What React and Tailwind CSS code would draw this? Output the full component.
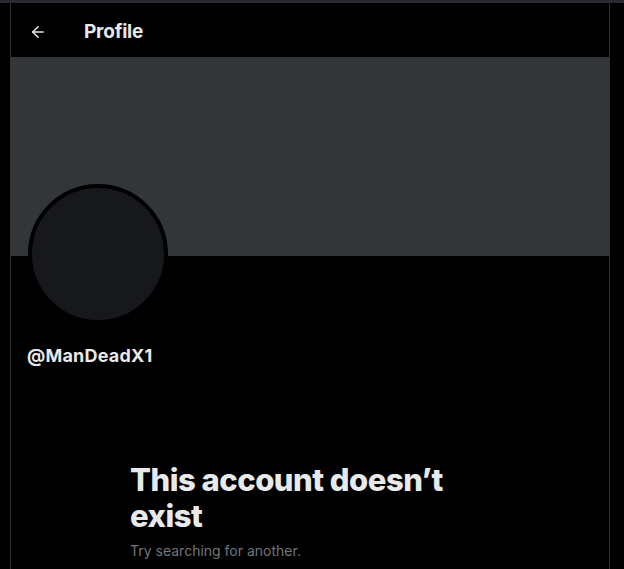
import { ArrowLeft } from "lucide-react";

export default function App() {
  return (
    <div className="h-[569px] w-[624px] overflow-hidden bg-black font-['Inter',sans-serif] text-[#e7e9ea]">
      <div className="h-[3px] bg-[#2b2a33]" />
      <div className="ml-[10px] flex h-[566px] w-[600px] flex-col border-x border-[#2f3336]">
        <div className="flex h-[54px] items-center px-4 pt-[4px]">
          <ArrowLeft className="ml-[2px] h-[18px] w-[18px]" strokeWidth={2} />
          <h1 className="ml-[37px] text-[19px] font-bold tracking-[-0.2px]">Profile</h1>
        </div>
        <div className="h-[199px] bg-[#333639]" />
        <div className="relative px-4">
          <div className="mt-[-72px] ml-[1px] h-[140px] w-[140px] rounded-full border-4 border-black bg-[#16181c]" />
          <p className="mt-[18px] text-[18px] font-bold tracking-[0.2px]">@ManDeadX1</p>
        </div>
        <div className="mt-[93px] pl-[119px]">
          <h2 className="w-[340px] text-[31px] font-extrabold leading-[36px] tracking-[-0.5px]">
            This account doesn’t exist
          </h2>
          <p className="mt-[6px] text-[14px] text-[#71767b]">Try searching for another.</p>
        </div>
      </div>
    </div>
  );
}
